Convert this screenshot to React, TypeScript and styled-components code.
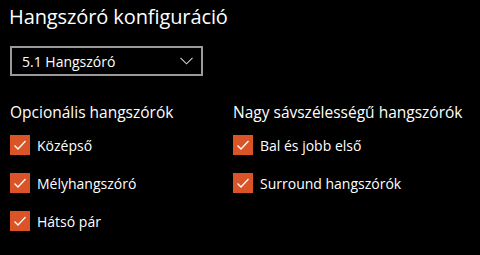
import React from 'react';
import styled, { createGlobalStyle } from 'styled-components';

const GlobalStyle = createGlobalStyle`
  html, body {
    margin: 0;
    padding: 0;
    background: #000;
  }
  body {
    font-family: 'Open Sans', 'Noto Sans', sans-serif;
    color: #fff;
  }
`;

const Page = styled.div`
  width: 480px;
  height: 255px;
  box-sizing: border-box;
  padding: 2px 10px 0 9px;
  background: #000;
`;

const Title = styled.h1`
  margin: 0;
  font-size: 20px;
  font-weight: 400;
  line-height: 30px;
  letter-spacing: -0.1px;
`;

const Select = styled.div`
  margin: 14px 0 0 1px;
  width: 193px;
  height: 30px;
  box-sizing: border-box;
  border: 2px solid #9a9a9a;
  display: flex;
  align-items: center;
  justify-content: space-between;
  padding: 0 8px 0 10px;
  font-size: 14px;
`;

const Columns = styled.div`
  display: grid;
  grid-template-columns: 223px 1fr;
  margin: 25px 0 0 1px;
`;

const Column = styled.div`
  display: flex;
  flex-direction: column;
`;

const Heading = styled.h2`
  margin: 0 0 12px;
  font-size: 15.5px;
  font-weight: 400;
  line-height: 22px;
`;

const Row = styled.label`
  display: flex;
  align-items: center;
  gap: 7px;
  height: 20px;
  margin-bottom: 18px;
  font-size: 14px;
`;

const Box = styled.span`
  width: 20px;
  height: 20px;
  background: #da5427;
  display: flex;
  align-items: center;
  justify-content: center;
  flex-shrink: 0;
`;

const Check = () => (
  <Box>
    <svg width="14" height="12" viewBox="0 0 14 12">
      <path d="M1.5 6.5 L5 10 L12.5 2" fill="none" stroke="#fff" strokeWidth="1.3" />
    </svg>
  </Box>
);

const Chevron = () => (
  <svg width="13" height="8" viewBox="0 0 13 8">
    <path d="M0.5 0.8 L6.5 6.8 L12.5 0.8" fill="none" stroke="#cfcfcf" strokeWidth="1.1" />
  </svg>
);

const optional = ['Középső', 'Mélyhangszóró', 'Hátsó pár'];
const wide = ['Bal és jobb első', 'Surround hangszórók'];

export default function App() {
  return (
    <Page>
      <GlobalStyle />
      <Title>Hangszóró konfiguráció</Title>
      <Select>
        <span>5.1 Hangszóró</span>
        <Chevron />
      </Select>
      <Columns>
        <Column>
          <Heading>Opcionális hangszórók</Heading>
          {optional.map((t) => (
            <Row key={t}>
              <Check />
              {t}
            </Row>
          ))}
        </Column>
        <Column>
          <Heading>Nagy sávszélességű hangszórók</Heading>
          {wide.map((t) => (
            <Row key={t}>
              <Check />
              {t}
            </Row>
          ))}
        </Column>
      </Columns>
    </Page>
  );
}
